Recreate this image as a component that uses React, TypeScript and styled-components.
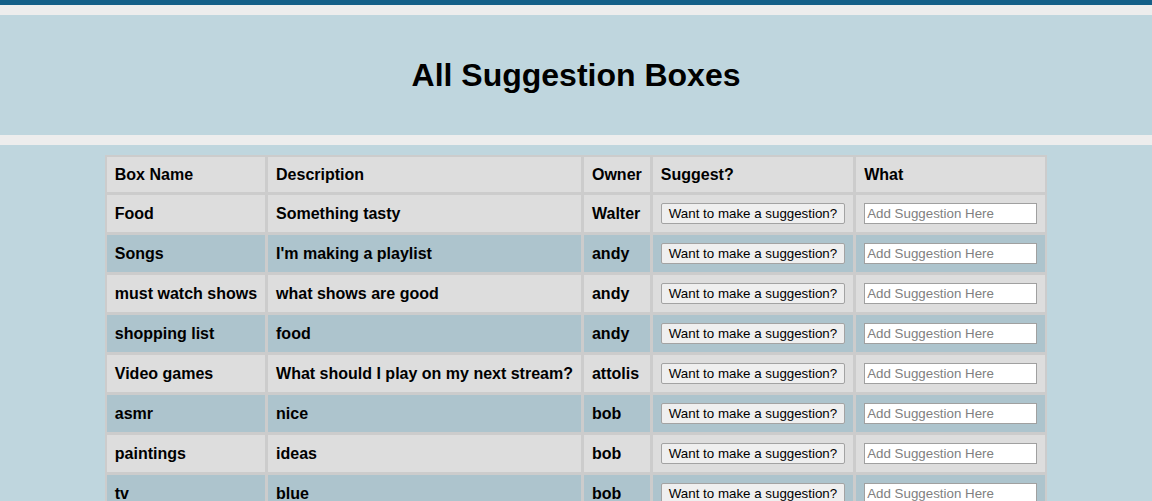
import React, { ReactElement } from "react";
import styled, { createGlobalStyle } from "styled-components";

const GlobalStyle = createGlobalStyle`
  html, body {
    margin: 0;
    padding: 0;
    background: #bfd6de;
    font-family: "Liberation Sans", Arial, sans-serif;
  }
`;

const TopBar = styled.div`
  height: 5px;
  background: #145f88;
`;

const Divider = styled.div`
  height: 10px;
  background: #ededed;
`;

const Banner = styled.header`
  height: 120px;
  display: flex;
  align-items: center;
  justify-content: center;
  background: #bfd6de;
`;

const Title = styled.h1`
  margin: 0;
  font-size: 32px;
  font-weight: bold;
  color: #000;
`;

const Main = styled.main`
  display: flex;
  justify-content: center;
  padding-top: 10px;
`;

const Table = styled.table`
  border-collapse: separate;
  border-spacing: 1px;
  background: #cccccc;
  font-size: 16px;
  font-weight: bold;
  color: #000;
`;

const Row = styled.tr<{ $alt?: boolean }>`
  background: ${(p) => (p.$alt ? "#adc4cd" : "#dddddd")};
`;

const HeadCell = styled.th`
  text-align: left;
  padding: 8px;
  line-height: 19px;
  border: 1px solid #cccccc;
  white-space: nowrap;
`;

const Cell = styled.td`
  padding: 8px;
  line-height: 19px;
  border: 1px solid #cccccc;
  white-space: nowrap;
`;

const SuggestButton = styled.button`
  font-family: "Liberation Sans", Arial, sans-serif;
  font-size: 13.33px;
  height: 21px;
  padding: 1px 7px;
  background: #efefef;
  border: 1px solid #a3a3a3;
  border-radius: 2px;
  color: #000;
  display: block;
`;

const SuggestInput = styled.input`
  font-family: "Liberation Sans", Arial, sans-serif;
  font-size: 13.33px;
  width: 173px;
  height: 21px;
  box-sizing: border-box;
  padding: 1px 2px;
  border: 1px solid #a0a0a0;
  background: #fff;
  display: block;
  &::placeholder {
    color: #808080;
  }
`;

const boxes = [
  { name: "Food", description: "Something tasty", owner: "Walter" },
  { name: "Songs", description: "I'm making a playlist", owner: "andy" },
  { name: "must watch shows", description: "what shows are good", owner: "andy" },
  { name: "shopping list", description: "food", owner: "andy" },
  { name: "Video games", description: "What should I play on my next stream?", owner: "attolis" },
  { name: "asmr", description: "nice", owner: "bob" },
  { name: "paintings", description: "ideas", owner: "bob" },
  { name: "tv", description: "blue", owner: "bob" },
  { name: "books", description: "good reads", owner: "bob" },
];

function App(): ReactElement {
  return (
    <>
      <GlobalStyle />
      <TopBar />
      <Divider />
      <Banner>
        <Title>All Suggestion Boxes</Title>
      </Banner>
      <Divider />
      <Main>
        <Table>
          <thead>
            <Row>
              <HeadCell>Box Name</HeadCell>
              <HeadCell>Description</HeadCell>
              <HeadCell>Owner</HeadCell>
              <HeadCell>Suggest?</HeadCell>
              <HeadCell>What</HeadCell>
            </Row>
          </thead>
          <tbody>
            {boxes.map((box, i) => (
              <Row key={i} $alt={i % 2 === 1}>
                <Cell>{box.name}</Cell>
                <Cell>{box.description}</Cell>
                <Cell>{box.owner}</Cell>
                <Cell>
                  <SuggestButton>Want to make a suggestion?</SuggestButton>
                </Cell>
                <Cell>
                  <SuggestInput placeholder="Add Suggestion Here" />
                </Cell>
              </Row>
            ))}
          </tbody>
        </Table>
      </Main>
    </>
  );
}

export default App;
